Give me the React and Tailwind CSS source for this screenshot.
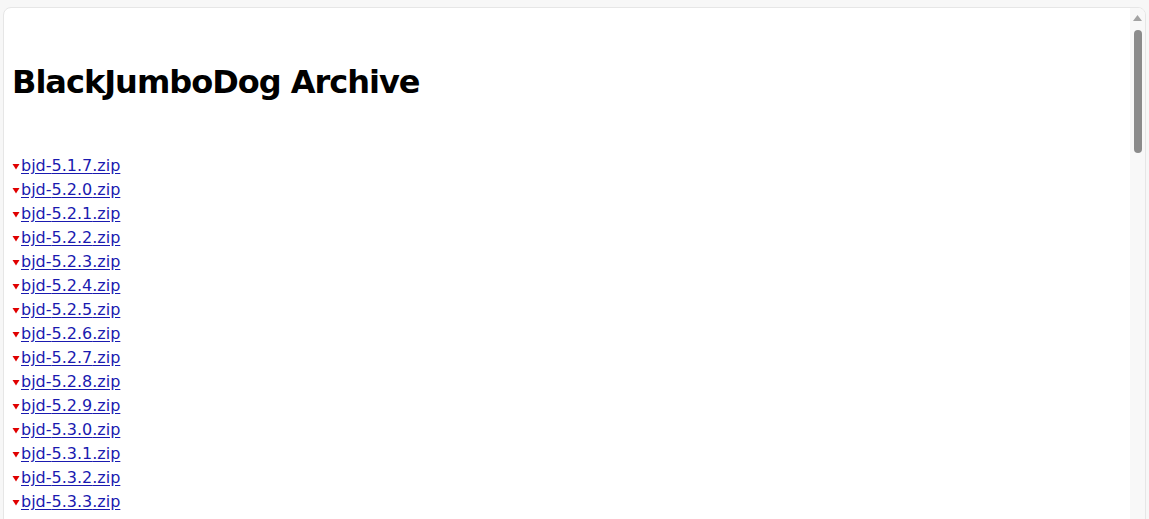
export default function App() {
  const versions = [
    "5.1.7", "5.2.0", "5.2.1", "5.2.2", "5.2.3", "5.2.4", "5.2.5", "5.2.6", "5.2.7",
    "5.2.8", "5.2.9", "5.3.0", "5.3.1", "5.3.2", "5.3.3", "5.3.4", "5.3.5", "5.3.6",
  ];
  return (
    <div className="h-[519px] w-[1149px] overflow-hidden bg-[#f7f7f7] pt-[7px] pl-[3px] pr-[3px]">
      <div className="flex h-[600px] rounded-t-[8px] border border-[#e6e6e6] bg-white overflow-hidden">
        <div className="flex-1 pl-[8px] overflow-hidden" style={{ fontFamily: '"DejaVu Sans", sans-serif' }}>
          <h1 className="mt-[54px] text-[32px] leading-[40px] font-bold text-black tracking-[-1px]">
            BlackJumboDog Archive
          </h1>
          <div className="mt-[52px] flex flex-col">
            {versions.map((v) => (
              <div key={v} className="h-[24px] leading-[24px] text-[16px]">
                <a href="#" className="text-[#1a1ab0] underline underline-offset-[2px] inline-flex items-baseline">
                  <svg width="9" height="6" viewBox="0 0 9 6" className="self-end mb-[8px]">
                    <polygon points="0.5,0 7.5,0 4,5.5" fill="#e00000" />
                  </svg>
                  <span>bjd-{v}.zip</span>
                </a>
              </div>
            ))}
          </div>
        </div>
        <div className="w-[15px] bg-[#f8f8f8] flex flex-col items-center pt-[7px]">
          <svg width="9" height="6" viewBox="0 0 9 6">
            <polygon points="4.5,0 9,6 0,6" fill="#a3a3a3" />
          </svg>
          <div className="mt-[9px] w-[8px] h-[123px] rounded-full bg-[#8b8b8b]" />
        </div>
      </div>
    </div>
  );
}
